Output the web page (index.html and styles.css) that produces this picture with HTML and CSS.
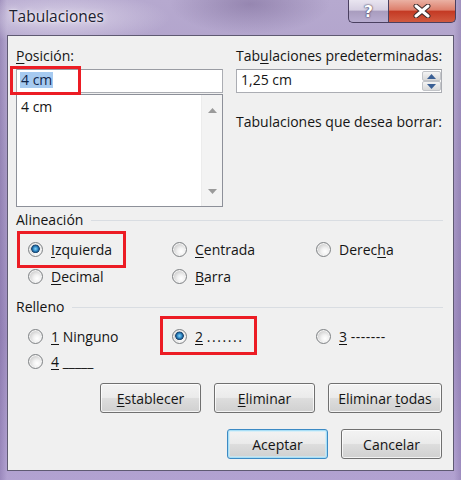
FILE: index.html
```html
<!DOCTYPE html>
<html lang="es">
<head>
<meta charset="utf-8">
<title>Tabulaciones</title>
<link rel="stylesheet" href="styles.css">
</head>
<body>
<div class="window">
  <div class="titlebar">
    <span class="title">Tabulaciones</span>
    <div class="caption-btns">
      <div class="cap help">?</div>
      <div class="cap close">
        <svg width="18" height="14" viewBox="0 0 18 14">
          <path d="M3 2 L15 12 M15 2 L3 12" stroke="#3b2a2a" stroke-width="5" stroke-linecap="round"/>
          <path d="M3 2 L15 12 M15 2 L3 12" stroke="#ffffff" stroke-width="3" stroke-linecap="round"/>
        </svg>
      </div>
    </div>
  </div>

  <div class="client">
    <div class="top">
      <div class="col">
        <div class="lbl"><u>P</u>osición:</div>
        <div class="textbox"><span class="sel">4 cm</span></div>
        <div class="listbox">
          <div class="items"><div class="item">4 cm</div></div>
          <div class="vscroll">
            <svg width="9" height="5" viewBox="0 0 9 5"><path d="M0 5 L4.5 0 L9 5 Z" fill="#9a9a9a"/></svg>
            <svg width="9" height="5" viewBox="0 0 9 5"><path d="M0 0 L4.5 5 L9 0 Z" fill="#9a9a9a"/></svg>
          </div>
        </div>
      </div>
      <div class="col">
        <div class="lbl">Tab<u>u</u>laciones predeterminadas:</div>
        <div class="spin">
          <span class="spin-val">1,25 cm</span>
          <div class="spin-btns">
            <div class="sb"><svg width="9" height="5" viewBox="0 0 9 5"><path d="M0 5 L4.5 0 L9 5 Z" fill="#3a5f94"/></svg></div>
            <div class="sb"><svg width="9" height="5" viewBox="0 0 9 5"><path d="M0 0 L4.5 5 L9 0 Z" fill="#3a5f94"/></svg></div>
          </div>
        </div>
        <div class="lbl borrar">Tabulaciones que desea borrar:</div>
      </div>
    </div>

    <div class="group-head first"><span>Alineación</span><div class="sep"></div></div>
    <div class="radios align">
      <div class="opt"><span class="radio checked"></span><span><u>I</u>zquierda</span></div>
      <div class="opt"><span class="radio"></span><span><u>C</u>entrada</span></div>
      <div class="opt"><span class="radio"></span><span>Derec<u>h</u>a</span></div>
      <div class="opt"><span class="radio"></span><span><u>D</u>ecimal</span></div>
      <div class="opt"><span class="radio"></span><span><u>B</u>arra</span></div>
    </div>

    <div class="group-head"><span>Relleno</span><div class="sep"></div></div>
    <div class="radios fill">
      <div class="opt"><span class="radio"></span><span><u>1</u> Ninguno</span></div>
      <div class="opt"><span class="radio checked"></span><span><u>2</u> <span class="dots">.......</span></span></div>
      <div class="opt"><span class="radio"></span><span><u>3</u> <span class="dashes">-------</span></span></div>
      <div class="opt"><span class="radio"></span><span><u>4</u> _____</span></div>
    </div>

    <div class="btnrow row1">
      <div class="btn w101"><span><u>E</u>stablecer</span></div>
      <div class="btn w101"><span><u>E</u>liminar</span></div>
      <div class="btn w113"><span>Eliminar <u>t</u>odas</span></div>
    </div>
    <div class="btnrow row2">
      <div class="btn default w101"><span>Aceptar</span></div>
      <div class="btn w101"><span>Cancelar</span></div>
    </div>

    <div class="mark m1"></div>
    <div class="mark m2"></div>
    <div class="mark m3"></div>
  </div>
</div>
</body>
</html>
```

FILE: styles.css
```css
* { box-sizing: border-box; }
html, body { margin: 0; padding: 0; }
body {
  font-family: "Open Sans", "Noto Sans", sans-serif;
  font-size: 14px;
  color: #151515;
}
u { text-decoration: underline; text-underline-offset: 2px; text-decoration-thickness: 1px; }

.window {
  width: 461px;
  height: 480px;
  display: flex;
  flex-direction: column;
  background:
    radial-gradient(ellipse 110px 26px at 60px 18px, rgba(230,224,240,0.7), rgba(230,224,240,0) 100%),
    radial-gradient(ellipse 80px 30px at 250px 4px, rgba(90,70,120,0.35), rgba(90,70,120,0) 100%),
    linear-gradient(90deg, rgba(110,90,150,0.35) 0px, rgba(110,90,150,0) 7px, rgba(110,90,150,0) 454px, rgba(110,90,150,0.3) 461px),
    linear-gradient(180deg, #b6a9cf 0%, #a899c5 35%, #a08fc0 70%, #b2a2d1 100%);
  overflow: hidden;
}

.titlebar {
  height: 35px;
  display: flex;
  justify-content: space-between;
  align-items: flex-start;
  padding-left: 9px;
  padding-right: 5px;
}
.title {
  font-size: 15.5px;
  line-height: 20px;
  margin-top: 6px;
  color: #1d2030;
  text-shadow: 0 0 6px rgba(255,255,255,0.9), 0 0 2px rgba(255,255,255,0.8);
}
.caption-btns { display: flex; }
.cap {
  height: 23px;
  display: flex;
  align-items: center;
  justify-content: center;
  border: 1px solid #4a4060;
  border-top: none;
}
.help {
  width: 40px;
  border-right: none;
  border-bottom-left-radius: 5px;
  background: linear-gradient(180deg, #e9e5f0 0%, #d6cfe2 45%, #a99dbf 52%, #b8add0 100%);
  color: #fff;
  font-weight: bold;
  font-size: 16px;
  font-family: "DejaVu Sans", sans-serif;
  text-shadow: 0 0 2px #3a3050, 0 0 1px #3a3050;
}
.close {
  width: 68px;
  border-bottom-right-radius: 5px;
  background: linear-gradient(180deg, #eab1a3 0%, #dd7f6c 45%, #c43a24 52%, #d15a40 100%);
}

.client {
  flex: 1;
  margin: 0 7px 9px 7px;
  background: #f0f0f0;
  border: 1px solid #5f5a72;
  padding: 11px 10px 0 8px;
  position: relative;
}

.top {
  display: grid;
  grid-template-columns: 207px 206px;
  column-gap: 13px;
}
.col { display: flex; flex-direction: column; }
.lbl { line-height: 18px; height: 18px; white-space: nowrap; }

.textbox {
  margin-top: 4px;
  height: 24px;
  background: #fff;
  border: 1px solid #abadb3;
  border-top-color: #9a9ca3;
  padding: 2px 0 0 3px;
  line-height: 16px;
}
.sel { background: #a6caf0; color: #10254a; padding: 0 1px; display: inline-block; line-height: 16px; }

.listbox {
  margin-top: 1px;
  height: 113px;
  background: #fff;
  border: 1px solid #8d9099;
  display: flex;
}
.items { flex: 1; padding: 3px 0 0 4px; }
.item { line-height: 18px; }
.vscroll {
  width: 21px;
  background: #f3f3f3;
  border-left: 1px solid #ececec;
  display: flex;
  flex-direction: column;
  justify-content: space-between;
  align-items: center;
  padding: 13px 0 12px;
}

.spin {
  margin-top: 4px;
  height: 24px;
  background: #fff;
  border: 1px solid #abadb3;
  border-top-color: #9a9ca3;
  display: flex;
  justify-content: space-between;
}
.spin-val { padding: 2px 0 0 4px; line-height: 16px; }
.spin-btns { width: 19px; display: flex; flex-direction: column; padding: 1px 0; }
.sb {
  flex: 1;
  display: flex;
  align-items: center;
  justify-content: center;
  border: 1px solid #c2c4c8;
  border-radius: 2px;
  background: linear-gradient(180deg, #f4f4f4 0%, #e6e6e6 50%, #d9d9d9 100%);
}
.borrar { margin-top: 20px; }

.group-head {
  display: flex;
  align-items: center;
  height: 18px;
  line-height: 18px;
  margin-top: 12px;
}
.group-head.first { margin-top: 4px; }
.sep { flex: 1; height: 1px; background: #d9dde2; margin-left: 8px; }

.radios {
  display: grid;
  grid-template-columns: 144px 144px 140px;
  padding-left: 12px;
  margin-top: 10px;
}
.radios.align { row-gap: 7px; }
.radios.fill { row-gap: 5px; }
.opt {
  display: flex;
  align-items: center;
  height: 20px;
  gap: 8px;
  white-space: nowrap;
}
.radio {
  width: 15px;
  height: 15px;
  border-radius: 50%;
  border: 1px solid #7f8285;
  background: radial-gradient(circle at 62% 65%, #ffffff 0%, #f2f2f2 30%, #d6d6d6 62%, #c4c4c4 100%);
  box-shadow: inset 0 0 0 1px #f4f4f4;
  flex: none;
}
.radio.checked {
  background:
    radial-gradient(circle at 50% 45%, #8fd6f6 0px, #3a95d0 2px, #1c5e95 3.2px, #244a70 4px, rgba(0,0,0,0) 4.6px),
    radial-gradient(circle at 62% 65%, #ffffff 0%, #f2f2f2 30%, #d6d6d6 62%, #c4c4c4 100%);
}
.dots { letter-spacing: 1.6px; }
.dashes { letter-spacing: 0.5px; }

.btnrow {
  display: flex;
  justify-content: flex-end;
  gap: 13px;
  padding-right: 1px;
}
.row1 { margin-top: 12px; }
.row2 { margin-top: 16px; }
.btn {
  height: 30px;
  display: flex;
  align-items: center;
  justify-content: center;
  border: 1px solid #707070;
  border-radius: 3px;
  background: linear-gradient(180deg, #f3f3f3 0%, #ebebeb 48%, #dddddd 52%, #d0d0d0 100%);
  box-shadow: inset 0 0 0 1px rgba(255,255,255,0.75);
  white-space: nowrap;
}
.w101 { width: 101px; }
.w113 { width: 114px; }
.btn.default {
  border-color: #3c8ac4;
  box-shadow: inset 0 0 0 1px #a8def6, inset 0 0 0 2px rgba(200,236,250,0.6);
}

.mark {
  position: absolute;
  border: 3px solid #ec1c24;
}
.m1 { left: 2px; top: 30px; width: 71px; height: 29px; }
.m2 { left: 9px; top: 195px; width: 109px; height: 37px; }
.m3 { left: 152px; top: 280px; width: 97px; height: 39px; }
```
